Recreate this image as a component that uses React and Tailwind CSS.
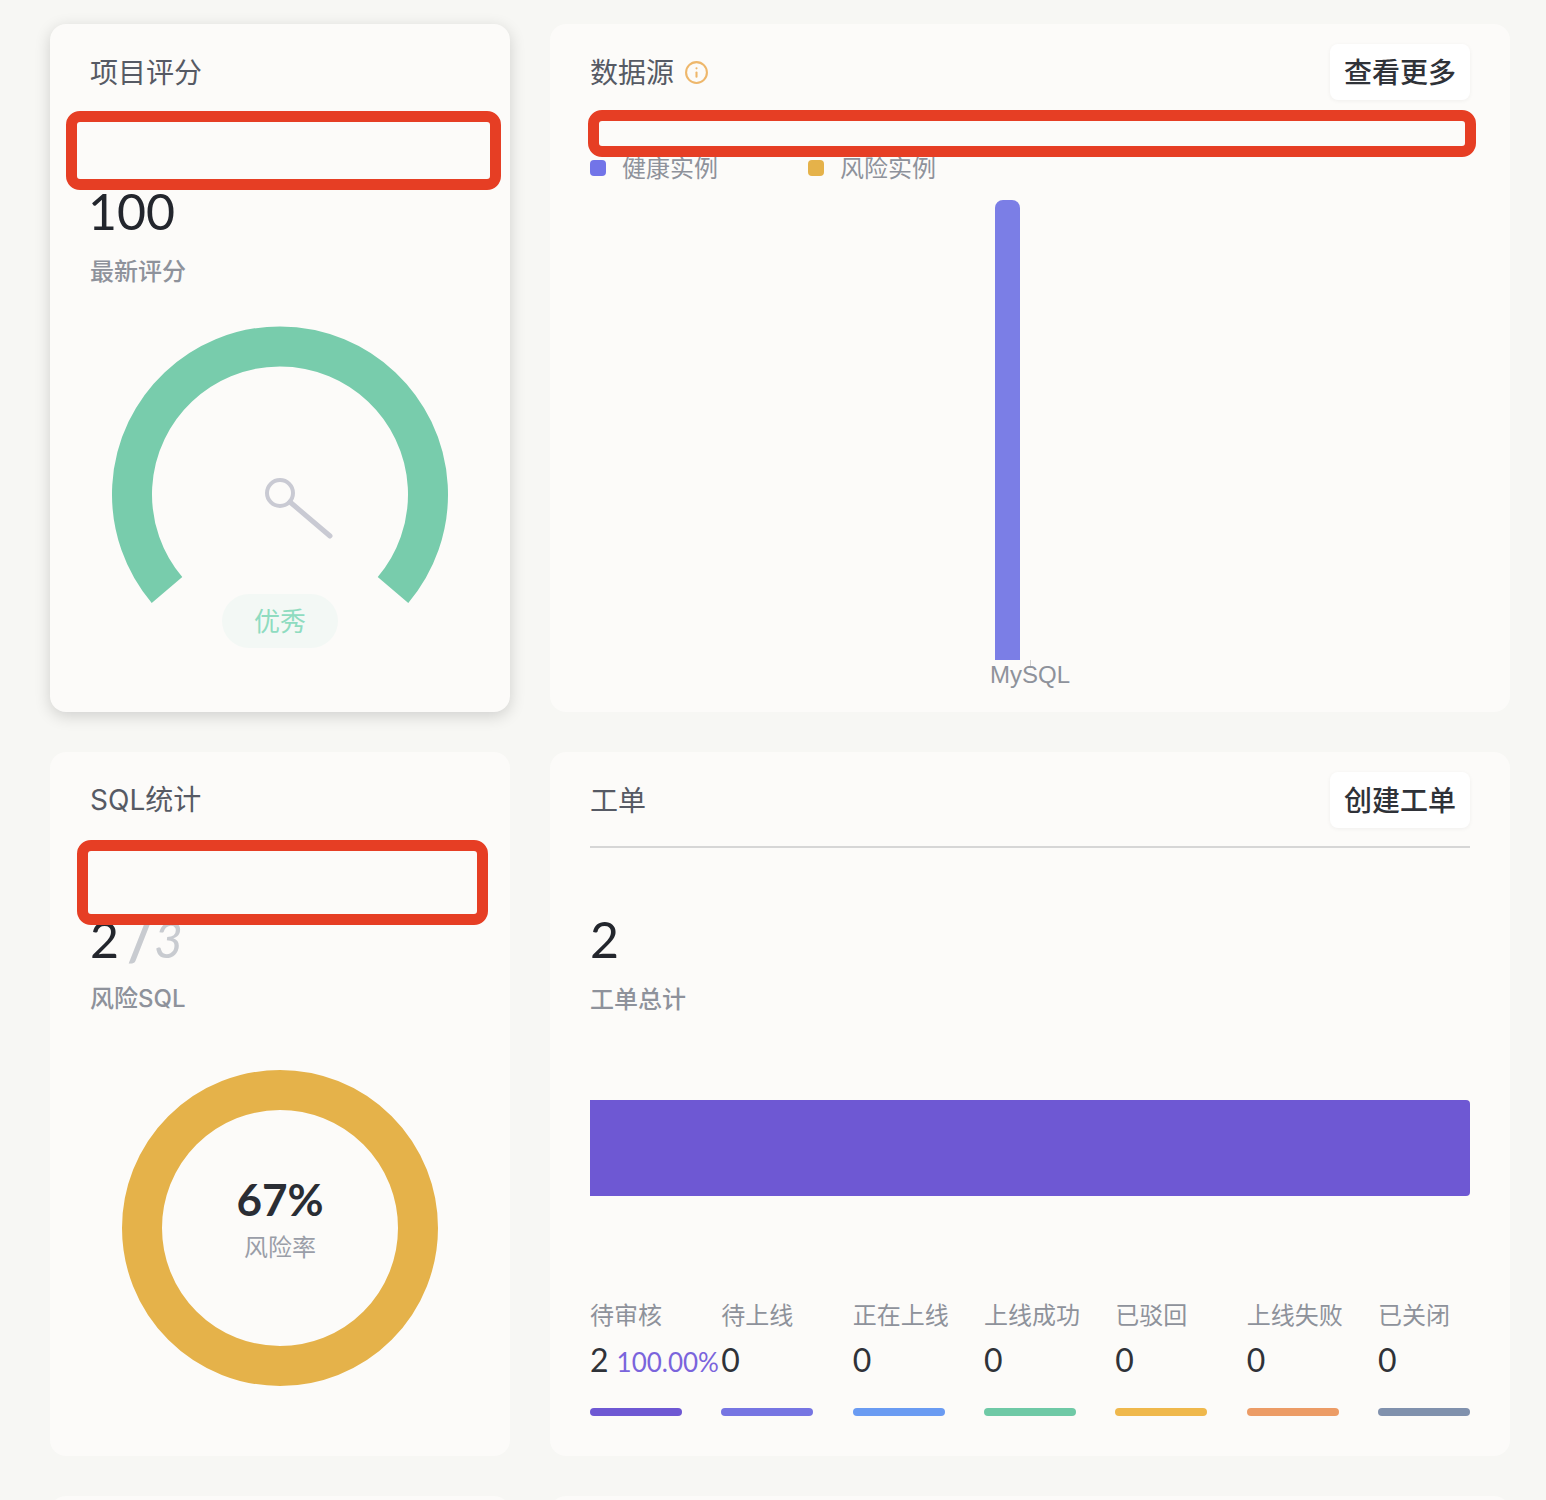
import React from 'react';
import { Info } from 'lucide-react';

const orderStats = [
  { label: '待审核', value: '2', percent: '100.00%', color: 'bg-[#6e58d3]' },
  { label: '待上线', value: '0', color: 'bg-[#7675e2]' },
  { label: '正在上线', value: '0', color: 'bg-[#6a9bf2]' },
  { label: '上线成功', value: '0', color: 'bg-[#6fc9a6]' },
  { label: '已驳回', value: '0', color: 'bg-[#efb84c]' },
  { label: '上线失败', value: '0', color: 'bg-[#ec9c66]' },
  { label: '已关闭', value: '0', color: 'bg-[#8091ad]' },
];

const RedMark = ({ className }) => (
  <div className={`absolute z-10 border-[11px] border-[#e63e24] rounded-[14px] bg-[#fcfbf9] ${className}`} />
);

const CardTitle = ({ children, className = '' }) => (
  <h3 className={`text-[28px] leading-[56px] text-[#565a64] ${className}`}>{children}</h3>
);

const HeaderButton = ({ children }) => (
  <button className="h-14 w-[140px] rounded-lg bg-white text-[28px] font-medium text-[#2f3238] shadow-[0_1px_4px_rgba(0,0,0,0.05)]">
    {children}
  </button>
);

const Gauge = () => (
  <div className="relative mt-[39px] h-[346px]">
    <svg width="380" height="300" viewBox="0 0 380 300" fill="none" className="block">
      <path d="M 77 264 A 148 148 0 1 1 303 264" stroke="#78ccac" strokeWidth="40" />
      <circle cx="190" cy="167" r="13" stroke="#c9cad3" strokeWidth="4" />
      <path d="M 200 176 L 240 210" stroke="#c9cad3" strokeWidth="5" strokeLinecap="round" />
    </svg>
    <div className="absolute left-[132px] top-[268px] flex h-[54px] w-[116px] items-center justify-center rounded-full bg-[#f3f8f5] text-[26px] text-[#8fdcc0]">
      优秀
    </div>
  </div>
);

const Donut = () => (
  <div className="relative mt-[55px] h-[316px]">
    <svg width="380" height="316" viewBox="0 0 380 316" fill="none" className="block">
      <circle cx="190" cy="158" r="138" stroke="#e5b24a" strokeWidth="40" />
    </svg>
    <div className="absolute left-0 top-[103px] w-full text-center">
      <div className="text-[44px] leading-[52px] font-bold text-[#2a2d34]">67%</div>
      <div className="mt-[6px] text-2xl leading-8 text-[#9a9ea8]">风险率</div>
    </div>
  </div>
);

const App = () => {
  return (
    <div className="h-[1500px] overflow-hidden bg-[#f7f7f4] pl-[50px] pr-9 pt-6 font-['Lato','Noto_Sans_CJK_SC',sans-serif]">
      <div className="grid grid-cols-[460px_960px] gap-10">
        {/* project score */}
        <section className="relative h-[688px] rounded-2xl bg-[#fcfbf9] px-10 pt-5 shadow-[0_4px_16px_rgba(0,0,0,0.16)]">
          <CardTitle>项目评分</CardTitle>
          <RedMark className="left-4 top-[87px] h-[79px] w-[435px]" />
          <div className="mt-[83px] -ml-0.5 text-[50px] leading-14 text-[#23262d]">100</div>
          <div className="mt-4 text-2xl leading-8 font-medium text-[#8e929b]">最新评分</div>
          <Gauge />
        </section>

        {/* data sources */}
        <section className="relative h-[688px] rounded-2xl bg-[#fcfbf9] px-10 pt-5">
          <div className="flex items-center justify-between">
            <div className="flex items-center gap-[10px]">
              <CardTitle>数据源</CardTitle>
              <Info size={25} strokeWidth={2} className="text-[#eeb76b]" />
            </div>
            <HeaderButton>查看更多</HeaderButton>
          </div>
          <RedMark className="left-[38px] top-[86px] h-[47px] w-[888px]" />
          <div className="mt-[52px] flex h-8 items-center text-2xl text-[#8e929b]">
            <div className="flex w-[218px] items-center gap-4">
              <span className="h-4 w-4 rounded bg-[#7274e8]" />
              健康实例
            </div>
            <div className="flex items-center gap-4">
              <span className="h-4 w-4 rounded bg-[#e5b24a]" />
              风险实例
            </div>
          </div>
          <div className="mt-4 flex h-[460px] items-end justify-center">
            <div className="mr-[45px] h-full w-[25px] rounded-t-lg bg-[#7b7ee6]" />
          </div>
          <div className="mx-auto h-2 w-px bg-[#cfcfcf]" />
          <div className="-mt-[5px] text-center font-['Liberation_Sans',sans-serif] text-2xl leading-6 text-[#8e929b]">
            MySQL
          </div>
        </section>

        {/* sql stats */}
        <section className="relative h-[704px] rounded-2xl bg-[#fcfbf9] px-10 pt-5">
          <CardTitle className="font-['Inter','Noto_Sans_CJK_SC',sans-serif]">SQL统计</CardTitle>
          <RedMark className="left-[27px] top-[88px] h-[85px] w-[411px]" />
          <div className="mt-[83px] flex h-14 items-center text-[50px] leading-14 text-[#23262d]">
            2
            <span className="ml-2 text-[58px] font-bold text-[#c8cbd0]">/</span>
            <span className="ml-0 italic text-[#c8cbd0]">3</span>
          </div>
          <div className="mt-4 font-['Inter','Noto_Sans_CJK_SC',sans-serif] text-2xl leading-8 font-medium text-[#8e929b]">风险SQL</div>
          <Donut />
        </section>

        {/* work orders */}
        <section className="relative h-[704px] rounded-2xl bg-[#fcfbf9] px-10 pt-5">
          <div className="flex h-[76px] items-start justify-between border-b-2 border-[#d6d6d6]">
            <CardTitle>工单</CardTitle>
            <HeaderButton>创建工单</HeaderButton>
          </div>
          <div className="mt-[63px] text-[50px] leading-14 text-[#23262d]">2</div>
          <div className="mt-4 text-2xl leading-8 font-medium text-[#8e929b]">工单总计</div>
          <div className="mt-[85px] h-24 rounded-r bg-[#6e58d3]" />
          <div className="mt-[103px] flex justify-between">
            {orderStats.map((stat) => (
              <div key={stat.label} className="w-[92px] whitespace-nowrap">
                <div className="text-2xl leading-8 text-[#8e929b]">{stat.label}</div>
                <div className="mt-[13px] flex h-8 items-center text-[32px] text-[#2f3238]">
                  {stat.value}
                  {stat.percent && <span className="ml-2 mt-1 text-[26px] text-[#7a64dc]">{stat.percent}</span>}
                </div>
                <div className={`mt-[32px] h-2 rounded ${stat.color}`} />
              </div>
            ))}
          </div>
        </section>

        <section className="h-40 rounded-2xl bg-[#fcfbf9]" />
        <section className="h-40 rounded-2xl bg-[#fcfbf9]" />
      </div>
    </div>
  );
};

export default App;
